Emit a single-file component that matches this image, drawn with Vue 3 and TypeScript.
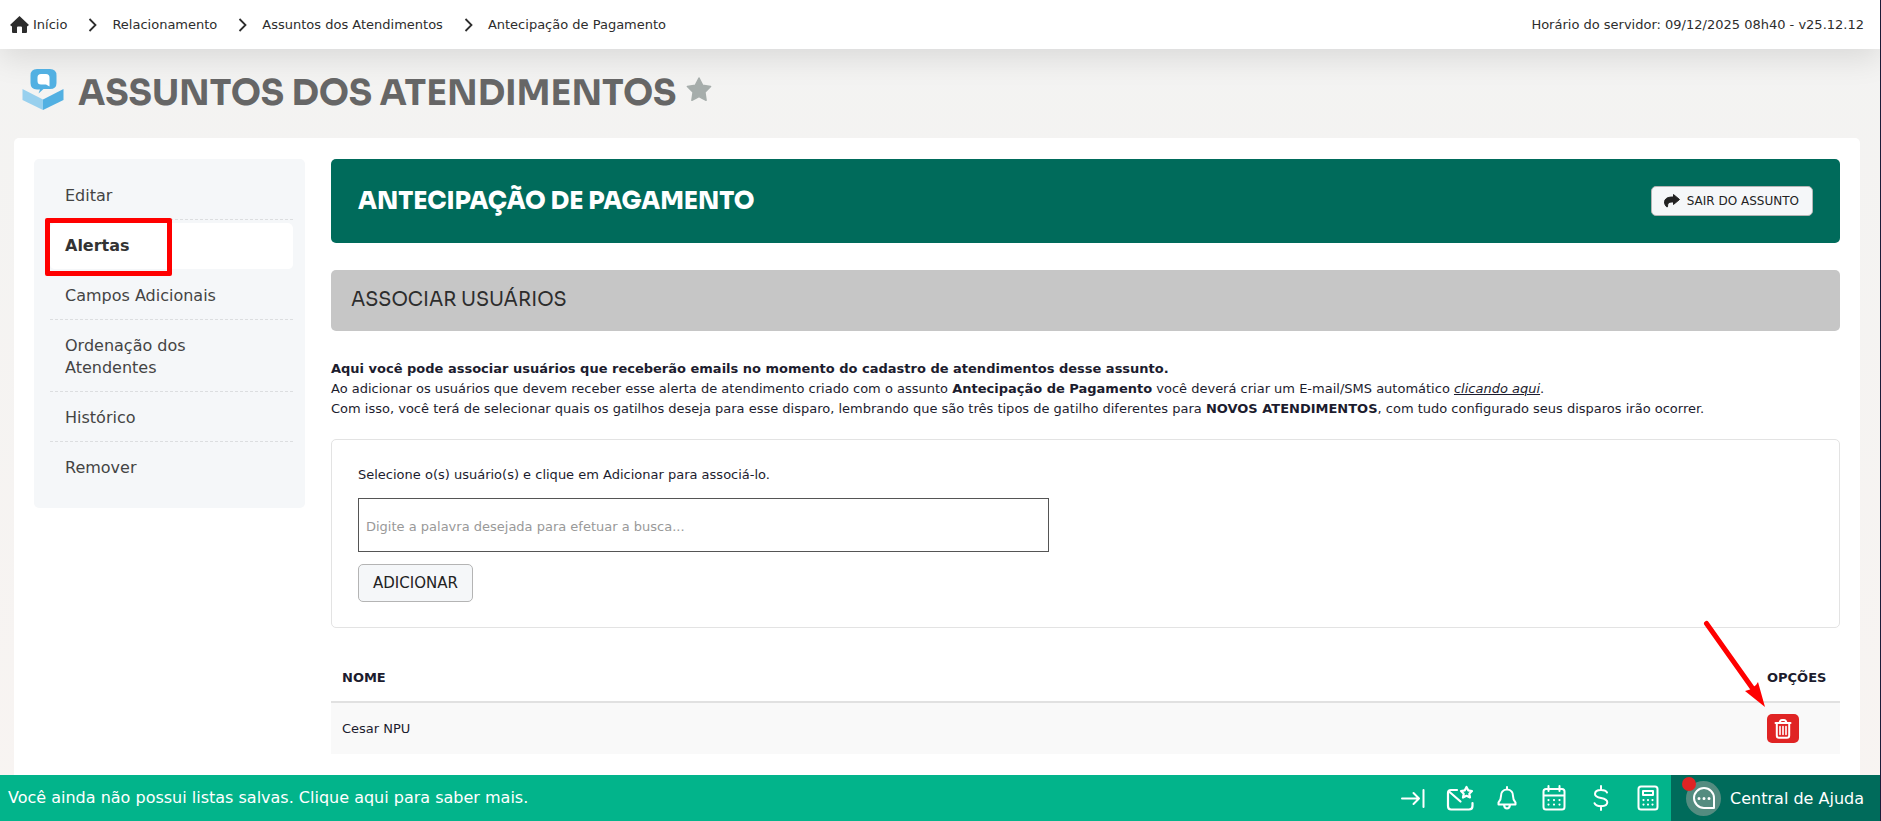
<script setup lang="ts">
import { ref } from 'vue'

interface NavItem {
  label: string
  active?: boolean
}

const crumbs: string[] = ['Relacionamento', 'Assuntos dos Atendimentos', 'Antecipação de Pagamento']

const navItems: NavItem[] = [
  { label: 'Editar' },
  { label: 'Alertas', active: true },
  { label: 'Campos Adicionais' },
  { label: 'Ordenação dos Atendentes' },
  { label: 'Histórico' },
  { label: 'Remover' },
]

const users = ref<string[]>(['Cesar NPU'])
const search = ref('')

function addUser(): void {
  const name = search.value.trim()
  if (name) users.value.push(name)
  search.value = ''
}

function removeUser(index: number): void {
  users.value.splice(index, 1)
}
</script>

<template>
  <div class="page">
    <header class="topbar">
      <nav class="crumbs" aria-label="Navegação estrutural">
        <a class="home" href="#">
          <svg width="19" height="17" viewBox="0 0 19 17" aria-hidden="true">
            <path d="M9.5 0 L19 9 L17 10.5 V16 Q17 17 16 17 H12 V11.5 Q12 10.5 11 10.5 H8 Q7 10.5 7 11.5 V17 H3 Q2 17 2 16 V10.5 L0 9 Z" fill="#2d2d2d" />
          </svg>
          <span>Início</span>
        </a>
        <template v-for="crumb in crumbs" :key="crumb">
          <svg class="chevron" width="9" height="14" viewBox="0 0 9 14" aria-hidden="true">
            <path d="M1.5 1 L7.5 7 L1.5 13" fill="none" stroke="#2d2d2d" stroke-width="1.8" />
          </svg>
          <a href="#">{{ crumb }}</a>
        </template>
      </nav>
      <span class="clock">Horário do servidor: 09/12/2025 08h40 - v25.12.12</span>
    </header>

    <div class="heading">
      <svg width="42" height="42" viewBox="0 0 42 42" aria-hidden="true">
        <path d="M0.5 20 L21 30.5 V41 L0.5 31 Z" fill="#98d0ee" />
        <path d="M41.5 20 L21 30.5 V41 L41.5 31 Z" fill="#52b0e2" />
        <path d="M15 0 H28 Q34.500 0 34.500 6.500 V14 Q34.500 20 28 20 H21.500 L16.500 24.500 L18 20.500 H15 Q8.500 20 8.500 14 V6.500 Q8.500 0 15 0 Z" fill="#52b0e2" />
        <path d="M19 5 H24 Q27.500 5 27.500 8.500 V17.500 L24 15.500 H19 Q15.500 15.500 15.500 12 V8.500 Q15.500 5 19 5 Z" fill="#fff" />
      </svg>
      <h1>ASSUNTOS DOS ATENDIMENTOS</h1>
      <button class="star" type="button" aria-label="Favoritar">
        <svg width="26" height="25" viewBox="0 0 26 25" aria-hidden="true">
          <path d="M13 1 L16.600 8.200 L24.600 9.500 L18.900 15.200 L20.100 23.300 L13 19.600 L5.900 23.300 L7.100 15.200 L1.400 9.500 L9.400 8.200 Z" fill="#a6adab" stroke="#a6adab" stroke-width="1.500" stroke-linejoin="round" />
        </svg>
      </button>
    </div>

    <div class="panel">
      <nav class="sidebar" aria-label="Assunto">
        <a v-for="item in navItems" :key="item.label" href="#" class="nav-item" :class="{ active: item.active }">
          {{ item.label }}
        </a>
      </nav>

      <main class="content">
        <section class="banner">
          <h2>ANTECIPAÇÃO DE PAGAMENTO</h2>
          <button class="leave" type="button">
            <svg width="16" height="14" viewBox="0 0 16 14" aria-hidden="true">
              <path d="M9.500 0.500 L15.500 5.500 L9.500 10.500 V8 C5.500 7.800 3.300 8.800 3.600 12.200 Q3.500 13.500 2.500 12.700 C0.500 10.500 0 8.500 1 6 C2.500 3.500 5 3 9.500 3 Z" fill="#222" stroke="#222" stroke-linejoin="round" />
            </svg>
            <span>SAIR DO ASSUNTO</span>
          </button>
        </section>

        <h3 class="section-title">ASSOCIAR USUÁRIOS</h3>

        <p class="intro">
          <strong>Aqui você pode associar usuários que receberão emails no momento do cadastro de atendimentos desse assunto.</strong><br />
          Ao adicionar os usuários que devem receber esse alerta de atendimento criado com o assunto <strong>Antecipação de Pagamento</strong> você deverá criar um E-mail/SMS automático <a href="#">clicando aqui</a>.<br />
          Com isso, você terá de selecionar quais os gatilhos deseja para esse disparo, lembrando que são três tipos de gatilho diferentes para <strong>NOVOS ATENDIMENTOS</strong>, com tudo configurado seus disparos irão ocorrer.
        </p>

        <form class="add-box" @submit.prevent="addUser">
          <label for="user-search">Selecione o(s) usuário(s) e clique em Adicionar para associá-lo.</label>
          <input id="user-search" v-model="search" type="text" placeholder="Digite a palavra desejada para efetuar a busca..." />
          <button class="add" type="submit">ADICIONAR</button>
        </form>

        <table class="users">
          <thead>
            <tr>
              <th scope="col">NOME</th>
              <th scope="col" class="options">OPÇÕES</th>
            </tr>
          </thead>
          <tbody>
            <tr v-for="(user, index) in users" :key="user">
              <td>{{ user }}</td>
              <td class="options">
                <div class="action">
                  <button class="trash" type="button" aria-label="Remover usuário" @click="removeUser(index)">
                    <svg width="18" height="20" viewBox="0 0 18 20" fill="none" stroke="#fff" stroke-linecap="round" stroke-linejoin="round" aria-hidden="true">
                      <path d="M1.500 4 H16.500 M5.500 4 Q6 1 8 1 H10 Q12 1 12.500 4" stroke-width="2" />
                      <path d="M2.800 4.500 V16.500 Q2.800 18.800 5 18.800 H13 Q15.200 18.800 15.200 16.500 V4.500" stroke-width="2" />
                      <path d="M6 7.500 V15.500 M9 7.500 V15.500 M12 7.500 V15.500" stroke-width="1.600" />
                    </svg>
                  </button>
                  <svg v-if="index === 0" class="pointer" width="64" height="88" viewBox="0 0 64 88" aria-hidden="true">
                    <path d="M3.500 3.500 L50 69" stroke="#f00" stroke-width="5" stroke-linecap="round" />
                    <path d="M62 87 L42 71 L47 69.500 L53 65 L55 62 Z" fill="#f00" />
                  </svg>
                </div>
              </td>
            </tr>
          </tbody>
        </table>
      </main>
    </div>

    <footer class="bottombar">
      <a class="lists" href="#">Você ainda não possui listas salvas. Clique aqui para saber mais.</a>
      <div class="tools">
        <button type="button" aria-label="Recolher">
          <svg width="24" height="26" viewBox="0 0 24 26" class="line"><path d="M1 13.500 H18 M12.500 8 L18 13.500 L12.500 19 M22.500 5 V22" /></svg>
        </button>
        <button type="button" aria-label="Mensagens">
          <svg width="28" height="26" viewBox="0 0 28 26" class="line">
            <path d="M11 5 H5 Q2 5 2 8 V21 Q2 24.500 5 24.500 H23 Q26.500 24.500 26.500 21 V18 M3 6.500 L14.500 16.500" stroke-width="2.200" />
            <path d="M20.500 2 L22.200 5.300 L26 6 L23.300 8.700 L24 12.500 L20.500 10.800 L17 12.500 L17.700 8.700 L15 6 L18.800 5.300 Z" stroke-width="2.200" />
          </svg>
        </button>
        <button type="button" aria-label="Notificações">
          <svg width="24" height="26" viewBox="0 0 24 26" class="line"><path d="M12 2 V4.500 M12 4.500 C7.500 4.500 6 8 6 11 C6 14.500 5.500 15.500 3.500 17.500 V19.500 H20.500 V17.500 C18.500 15.500 18 14.500 18 11 C18 8 16.500 4.500 12 4.500 Z M9 20 Q9.500 23.500 12 23.500 Q14.500 23.500 15 20" /></svg>
        </button>
        <button type="button" aria-label="Calendário">
          <svg width="24" height="26" viewBox="0 0 24 26" class="line">
            <path d="M4 4 H20 Q22.500 4 22.500 6.500 V22 Q22.500 24.500 20 24.500 H4 Q1.500 24.500 1.500 22 V6.500 Q1.500 4 4 4 Z M1.500 10.500 H22.500 M6.500 1 V6 M17.500 1 V6" />
            <path d="M6.500 15 V15.100 M12 15 V15.100 M17.500 15 V15.100 M6.500 19.500 V19.600 M12 19.500 V19.600 M17.500 19.500 V19.600" stroke-width="2.200" />
          </svg>
        </button>
        <button type="button" aria-label="Financeiro">
          <svg width="24" height="26" viewBox="0 0 24 26" class="line"><path d="M12 1 V5 M12 21 V25 M18 7.500 C17 5.500 15 5 12 5 C8.500 5 6 6.500 6 9 C6 11.500 8.500 12.300 12 13 C16 13.800 18.300 14.800 18.300 17.300 C18.300 20 15.500 21.200 12 21.200 C8.500 21.200 6.300 20.300 5.500 18.200" /></svg>
        </button>
        <button type="button" aria-label="Calculadora">
          <svg width="24" height="26" viewBox="0 0 24 26" class="line">
            <path d="M5 1.500 H19 Q21.500 1.500 21.500 4 V22 Q21.500 24.500 19 24.500 H5 Q2.500 24.500 2.500 22 V4 Q2.500 1.500 5 1.500 Z M7 6 H17 V10 H7 Z" />
            <path d="M7.500 15 V15.100 M12 15 V15.100 M16.500 15 V15.100 M7.500 19.500 V19.600 M12 19.500 V19.600 M16.500 19.500 V19.600" stroke-width="2.200" />
          </svg>
        </button>
      </div>
      <button class="help" type="button">
        <span class="bubble">
          <svg width="24" height="24" viewBox="0 0 24 24" class="line" aria-hidden="true">
            <path d="M22 22 V12 A10 10 0 1 0 12 22 Z" />
            <path class="dots" d="M7 12.500 V12.600 M12 12.500 V12.600 M17 12.500 V12.600" />
          </svg>
        </span>
        <span>Central de Ajuda</span>
      </button>
    </footer>
  </div>
</template>

<style>
body {
  margin: 0;
}
</style>

<style scoped>
.page {
  box-sizing: border-box;
  min-height: 100vh;
  display: flex;
  flex-direction: column;
  border-right: 1px solid #1c1c38;
  background: linear-gradient(#f3f3f2, #f8f4f2);
  color: #1c1c2e;
  font-family: Verdana, "DejaVu Sans", sans-serif;
  font-size: 13px;
  line-height: 20px;
}

button,
input {
  font-family: inherit;
  color: inherit;
}

button {
  margin: 0;
  padding: 0;
  border: 0;
  background: none;
  cursor: pointer;
}

svg {
  display: block;
  flex: none;
}

h1,
h2,
h3,
p {
  margin: 0;
}

h1,
h2,
h3 {
  font-family: Sora, Inter, sans-serif;
}

.topbar {
  display: flex;
  align-items: center;
  justify-content: space-between;
  height: 49px;
  padding: 0 16px 0 10px;
  background: #fff;
  color: #2d2d2d;
  box-shadow: 0 10px 30px rgba(0, 0, 0, 0.1);
}

.crumbs {
  display: flex;
  align-items: center;
}

.crumbs a {
  color: inherit;
  text-decoration: none;
}

.home {
  display: flex;
  align-items: center;
  gap: 4px;
}

.chevron {
  margin: 0 15px 0 21px;
}

.heading {
  display: flex;
  align-items: center;
  gap: 14px;
  height: 81px;
  padding: 0 22px;
}

.heading h1 {
  padding-top: 6px;
  color: #666;
  font-size: 35px;
  font-weight: 700;
  line-height: 44px;
}

.star {
  margin-left: -4px;
}

.panel {
  flex: 1;
  display: flex;
  align-items: flex-start;
  gap: 26px;
  margin: 8px 20px 0 14px;
  padding: 21px 20px;
  border-radius: 5px 5px 0 0;
  background: #fff;
}

.sidebar {
  box-sizing: border-box;
  flex: none;
  display: flex;
  flex-direction: column;
  gap: 3px;
  width: 271px;
  padding: 14px 12px 16px 16px;
  border-radius: 5px;
  background: #f5f7f9;
}

.nav-item {
  position: relative;
  padding: 12px 32px 12px 15px;
  border-bottom: 1px dashed #dcdee0;
  color: #444;
  font-size: 16px;
  line-height: 22px;
  text-decoration: none;
}

.nav-item:last-child {
  border-bottom-color: transparent;
}

.nav-item.active {
  border-bottom-color: transparent;
  border-radius: 5px;
  background: #fff;
  background-clip: padding-box;
  color: #333;
  font-weight: 700;
}

.nav-item.active::after {
  content: "";
  position: absolute;
  box-sizing: border-box;
  top: -5px;
  left: -5px;
  width: 127px;
  height: 58px;
  border: 5px solid #f00;
  border-radius: 2px;
}

.content {
  flex: 1;
  min-width: 0;
}

.banner {
  display: flex;
  align-items: center;
  justify-content: space-between;
  height: 84px;
  padding: 0 27px;
  border-radius: 5px;
  background: #006b5b;
}

.banner h2 {
  color: #fff;
  font-size: 24px;
  font-weight: 800;
  line-height: 32px;
}

.leave {
  display: flex;
  align-items: center;
  gap: 7px;
  height: 30px;
  padding: 0 13px 0 12px;
  border: 1px solid #b4b4b4;
  border-radius: 5px;
  background: #f5f7f9;
  color: #222;
  font-size: 12px;
}

.section-title {
  margin-top: 27px;
  padding: 16px 20px 17px;
  border-radius: 5px;
  background: #c6c6c6;
  color: #2d2d2d;
  font-size: 19px;
  font-weight: 400;
  line-height: 28px;
}

.intro {
  margin-top: 28px;
}

.intro a {
  color: inherit;
  font-style: italic;
}

.add-box {
  display: flex;
  flex-direction: column;
  align-items: flex-start;
  margin-top: 20px;
  padding: 25px 26px;
  border: 1px solid #e3e3e3;
  border-radius: 5px;
}

.add-box input {
  box-sizing: border-box;
  width: 47.5%;
  height: 54px;
  margin: 13px 0 12px;
  padding: 3px 7px 0;
  border: 1px solid #555;
  background: #fff;
  font-size: 13px;
}

.add-box input::placeholder {
  color: #999;
  opacity: 1;
}

.add {
  height: 38px;
  padding: 0 14px;
  border: 1px solid #b4b4b4;
  border-radius: 5px;
  background: #f5f7f9;
  color: #222;
  font-size: 15px;
}

.users {
  width: 100%;
  margin-top: 27px;
  border-collapse: separate;
  border-spacing: 0;
  text-align: left;
}

.users th {
  padding: 13px 11px;
  border-bottom: 2px solid #e1e1e1;
}

.users td {
  padding: 11px;
  background: #f9f9f9;
}

.users .options {
  width: 62px;
}

.action {
  position: relative;
}

.trash {
  display: flex;
  align-items: center;
  justify-content: center;
  width: 32px;
  height: 29px;
  border-radius: 5px;
  background: #e02424;
}

.pointer {
  position: absolute;
  top: -94px;
  left: -64px;
  pointer-events: none;
}

.bottombar {
  display: flex;
  align-items: center;
  height: 46px;
  background: #02b48b;
  color: #fff;
  font-size: 16px;
}

.lists {
  flex: 1;
  padding-left: 8px;
  color: inherit;
  text-decoration: none;
}

.tools {
  display: flex;
}

.tools button {
  display: flex;
  align-items: center;
  justify-content: center;
  width: 47px;
  height: 46px;
}

.line {
  fill: none;
  stroke: #fff;
  stroke-width: 2px;
  stroke-linecap: round;
  stroke-linejoin: round;
}

.dots {
  stroke-width: 3px;
}

.help {
  display: flex;
  align-items: center;
  gap: 9px;
  height: 46px;
  padding: 0 16px 0 15px;
  background: #006b5b;
  color: #fff;
  font-size: 16px;
}

.bubble {
  position: relative;
  display: flex;
  align-items: center;
  justify-content: center;
  width: 35px;
  height: 35px;
  border-radius: 50%;
  background: #548c80;
}

.bubble::before {
  content: "";
  position: absolute;
  top: -4px;
  left: -4px;
  width: 14px;
  height: 14px;
  border-radius: 50%;
  background: #e02424;
}
</style>
